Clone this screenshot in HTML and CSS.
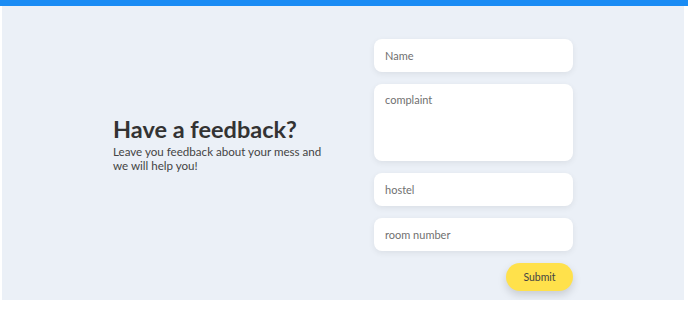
FILE: index.html
```html
<!DOCTYPE html>
<html lang="en">
<head>
    <meta charset="UTF-8">
    <meta name="viewport" content="width=device-width, initial-scale=1.0">
    <title>Feedback</title>
    <link rel="stylesheet" href="styles.css">
</head>
<body>
    <div class="top-bar"></div>

    <div class="feedback-section">
        <div class="feedback-text">
            <h1 class="feedback-title">Have a feedback?</h1>
            <p class="feedback-sub">Leave you feedback about your mess and we will help you!</p>
        </div>

        <form class="feedback-form" onsubmit="return false;">
            <input type="text" class="form-input" placeholder="Name">
            <textarea class="form-input form-textarea" placeholder="complaint"></textarea>
            <input type="text" class="form-input" placeholder="hostel">
            <input type="text" class="form-input" placeholder="room number">
            <button type="submit" class="submit-button">Submit</button>
        </form>
    </div>
</body>
</html>
```

FILE: styles.css
```css
body {
    margin: 0;
    background-color: #ffffff;
    font-family: 'Lato', sans-serif;
    color: #333;
}

.top-bar {
    height: 6px;
    background-color: #1a8cf4;
}

.feedback-section {
    margin: 0 4px 0 2px;
    height: 294px;
    box-sizing: border-box;
    padding: 34px 0 10px;
    background-color: #ebf0f7;
    display: flex;
    justify-content: center;
    align-items: center;
    gap: 41px;
}

.feedback-text {
    width: 220px;
    margin-bottom: 42px;
}

.feedback-title {
    margin: 0 0 2px;
    font-size: 23.5px;
    line-height: 28px;
    font-weight: bold;
    color: #333;
}

.feedback-sub {
    margin: 0;
    font-size: 11.6px;
    line-height: 14px;
    color: #444;
}

.feedback-form {
    width: 199px;
    display: flex;
    flex-direction: column;
    gap: 12px;
}

.form-input {
    height: 33px;
    box-sizing: border-box;
    padding: 0 11px;
    border: none;
    border-radius: 8px;
    background-color: #fff;
    box-shadow: 0 2px 6px rgba(0, 0, 0, 0.07);
    font-family: inherit;
    font-size: 11px;
    color: #333;
    outline: none;
}

.form-input::placeholder {
    color: #707070;
}

.form-textarea {
    height: 77px;
    padding-top: 9px;
    resize: none;
}

.submit-button {
    align-self: flex-end;
    width: 67px;
    height: 28px;
    border: none;
    border-radius: 14px;
    background-color: #ffe14b;
    box-shadow: 0 4px 8px rgba(0, 0, 0, 0.15);
    font-family: inherit;
    font-size: 10.5px;
    color: #444;
    cursor: pointer;
}
```
